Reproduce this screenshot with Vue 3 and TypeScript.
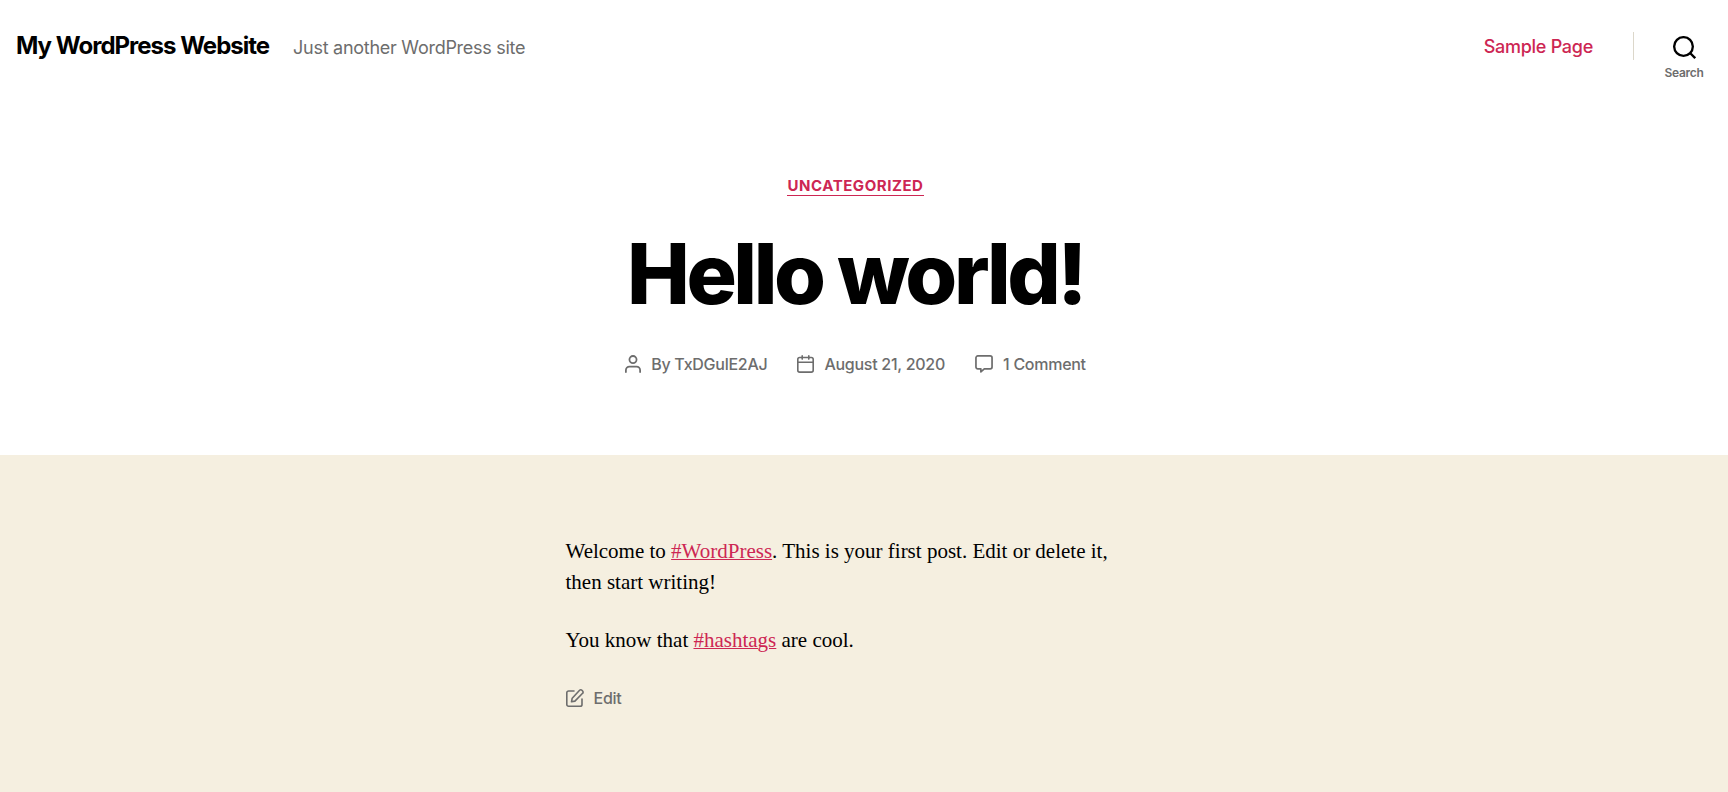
<script setup lang="ts">
interface SiteInfo {
  title: string
  tagline: string
}

interface Post {
  category: string
  title: string
  author: string
  date: string
  comments: string
}

const site: SiteInfo = {
  title: 'My WordPress Website',
  tagline: 'Just another WordPress site',
}

const post: Post = {
  category: 'Uncategorized',
  title: 'Hello world!',
  author: 'TxDGulE2AJ',
  date: 'August 21, 2020',
  comments: '1 Comment',
}
</script>

<template>
  <div class="page">
    <header class="site-header">
      <div class="titles">
        <a class="site-title" href="#">{{ site.title }}</a>
        <span class="tagline">{{ site.tagline }}</span>
      </div>
      <div class="navigation">
        <nav aria-label="Primary">
          <a class="nav-link" href="#">Sample Page</a>
        </nav>
        <div class="toggle-wrap">
          <button class="search-toggle" type="button">
            <svg class="search-icon" viewBox="0 0 23 23" aria-hidden="true">
              <circle cx="10.5" cy="10.5" r="9.34" />
              <path d="M17.3 17.3 22.2 22.2" />
            </svg>
            <span>Search</span>
          </button>
        </div>
      </div>
    </header>

    <main>
      <div class="entry-header">
        <a class="category" href="#">{{ post.category }}</a>
        <h1 class="entry-title">{{ post.title }}</h1>
        <ul class="meta">
          <li>
            <svg class="icon-user" viewBox="0 0 18 20" aria-hidden="true">
              <path d="M17 19v-2a4 4 0 0 0-4-4H5a4 4 0 0 0-4 4v2" />
              <circle cx="9" cy="5" r="4" />
            </svg>
            <span>By <a href="#">{{ post.author }}</a></span>
          </li>
          <li>
            <svg class="icon-date" viewBox="0 0 18 19" aria-hidden="true">
              <rect x="0.85" y="2.6" width="16.3" height="15.5" rx="2" />
              <path d="M1 7.6h16M5.5 0.9v3.4M12.5 0.9v3.4" />
            </svg>
            <a href="#">{{ post.date }}</a>
          </li>
          <li>
            <svg class="icon-comment" viewBox="0 0 19 19" aria-hidden="true">
              <path d="M3 1h13a2 2 0 0 1 2 2v9.6a2 2 0 0 1-2 2h-6.2L6.2 17.8v-3.2H3a2 2 0 0 1-2-2V3a2 2 0 0 1 2-2z" />
            </svg>
            <a href="#">{{ post.comments }}</a>
          </li>
        </ul>
      </div>

      <article class="entry">
        <div class="entry-content">
          <p>
            Welcome to <a href="#">#WordPress</a>. This is your first post. Edit or delete it,
            then start writing!
          </p>
          <p>You know that <a href="#">#hashtags</a> are cool.</p>
          <a class="edit-link" href="#">
            <svg class="icon-edit" viewBox="0 0 18 18" aria-hidden="true">
              <path d="M8 2H2.6A1.8 1.8 0 0 0 .8 3.8v11.6a1.8 1.8 0 0 0 1.8 1.8h11.6a1.8 1.8 0 0 0 1.8-1.8V10" />
              <path d="M13.6 1.3a1.6 1.6 0 0 1 2.3 0l.7.7a1.6 1.6 0 0 1 0 2.3l-7.7 7.8-3.4.7.7-3.6z" />
            </svg>
            <span>Edit</span>
          </a>
        </div>
      </article>
    </main>
  </div>
</template>

<style>
body {
  margin: 0;
  background: #f5efe0;
}
</style>

<style scoped>
.page {
  font-family: Inter, "Liberation Sans", sans-serif;
  font-size: 18px;
  letter-spacing: -0.015em;
  color: #000;
}

a {
  color: inherit;
  text-decoration: none;
}

svg {
  display: block;
  flex: none;
  fill: none;
  stroke: currentColor;
}

.site-header {
  display: flex;
  justify-content: space-between;
  align-items: flex-start;
  padding: 32px 33px 28px 16px;
  background: #fff;
}

.titles {
  display: flex;
  align-items: baseline;
  gap: 24px;
}

.site-title {
  font-size: 24px;
  line-height: 28px;
  font-weight: 700;
  letter-spacing: -0.0415em;
}

.tagline {
  color: #6d6d6d;
  line-height: 28px;
}

.navigation {
  display: flex;
  align-items: flex-start;
  gap: 40px;
}

.nav-link {
  display: block;
  line-height: 30px;
  font-weight: 500;
  color: #cd2653;
}

.toggle-wrap {
  display: flex;
}

.toggle-wrap::before {
  content: "";
  width: 1px;
  height: 28px;
  background: #dcd7ca;
}

.search-toggle {
  display: flex;
  flex-direction: column;
  align-items: center;
  gap: 7px;
  width: 40px;
  margin: 4px -9px 0 30px;
  padding: 0;
  border: 0;
  background: none;
  font: 600 12px/14px Inter, "Liberation Sans", sans-serif;
  letter-spacing: inherit;
  color: #6d6d6d;
}

.search-icon {
  width: 23px;
  height: 23px;
  color: #000;
  stroke-width: 2.33;
}

.entry-header {
  display: flex;
  flex-direction: column;
  align-items: center;
  padding: 69px 17px 79px 0;
  background: #fff;
}

.category {
  border-bottom: 1px solid #cd2653;
  color: #cd2653;
  font-size: 15px;
  line-height: 18px;
  font-weight: 700;
  letter-spacing: 0.0366em;
  text-transform: uppercase;
}

.entry-title {
  margin: 30px 0;
  font-size: 84px;
  line-height: 96px;
  font-weight: 800;
  letter-spacing: -0.0415em;
}

.meta {
  display: flex;
  flex-wrap: wrap;
  justify-content: center;
  gap: 8px 30px;
  margin: 0;
  padding: 0;
  list-style: none;
  color: #6d6d6d;
  font-size: 16px;
  line-height: 24px;
  font-weight: 500;
}

.meta li {
  display: flex;
  align-items: center;
  gap: 10px;
}

.icon-user {
  width: 16px;
  height: 18px;
  stroke-width: 2;
  stroke-linecap: round;
}

.icon-date {
  width: 17px;
  height: 18px;
  stroke-width: 1.7;
  stroke-linecap: round;
}

.icon-comment {
  width: 18px;
  height: 18px;
  stroke-width: 1.8;
  stroke-linejoin: round;
}

.entry {
  padding: 81px 17px 80px 0;
  background: #f5efe0;
}

.entry-content {
  max-width: 580px;
  margin: 0 auto;
  font-family: "Liberation Serif", serif;
  font-size: 21px;
  line-height: 31px;
  letter-spacing: normal;
}

.entry-content p {
  margin: 0 0 27px;
}

.entry-content p a {
  color: #cd2653;
  text-decoration: underline;
  text-decoration-thickness: 1px;
}

.entry-content .edit-link {
  display: flex;
  align-items: center;
  gap: 10px;
  width: fit-content;
  margin-top: 30px;
  color: #6d6d6d;
  font: 500 16px/24px Inter, "Liberation Sans", sans-serif;
  letter-spacing: -0.015em;
}

.icon-edit {
  width: 18px;
  height: 18px;
  stroke-width: 1.6;
  stroke-linecap: round;
  stroke-linejoin: round;
}
</style>
